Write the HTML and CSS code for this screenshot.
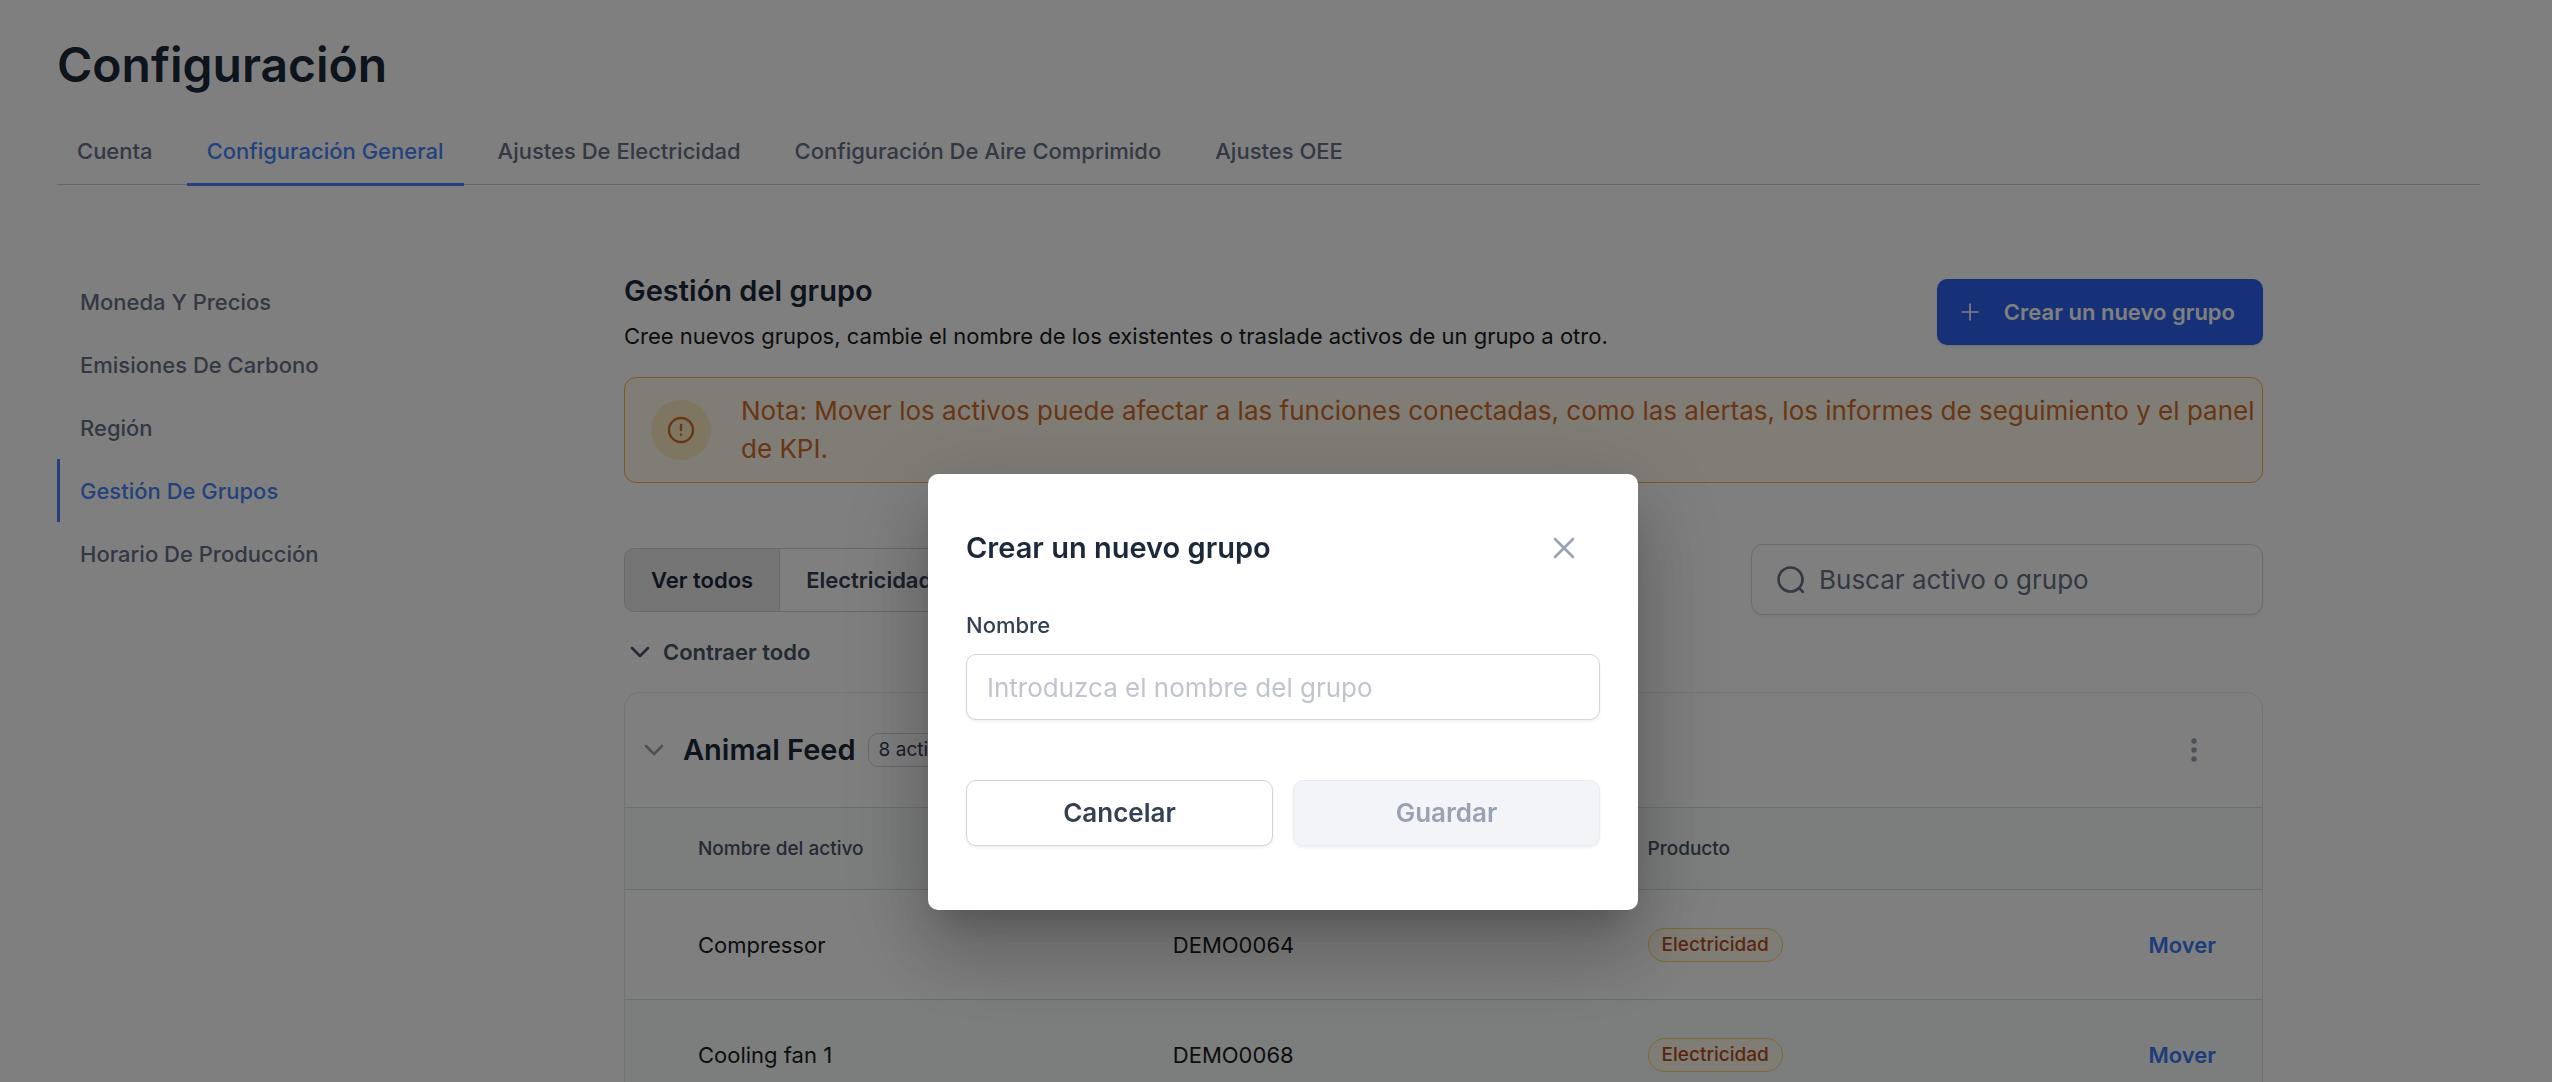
FILE: index.html
```html
<!DOCTYPE html>
<html lang="es">
<head>
    <meta charset="UTF-8">
    <meta name="viewport" content="width=device-width, initial-scale=1.0">
    <title>Configuración</title>
    <link rel="stylesheet" href="styles.css">
</head>
<body>
    <div class="page">
        <h1>Configuración</h1>

        <nav class="tabs">
            <a href="#" class="tab">Cuenta</a>
            <a href="#" class="tab active">Configuración General</a>
            <a href="#" class="tab">Ajustes De Electricidad</a>
            <a href="#" class="tab">Configuración De Aire Comprimido</a>
            <a href="#" class="tab">Ajustes OEE</a>
        </nav>

        <div class="layout">
            <nav class="side-menu">
                <a href="#">Moneda Y Precios</a>
                <a href="#">Emisiones De Carbono</a>
                <a href="#">Región</a>
                <a href="#" class="active">Gestión De Grupos</a>
                <a href="#">Horario De Producción</a>
            </nav>

            <main>
                <div class="section-header">
                    <div>
                        <h2>Gestión del grupo</h2>
                        <p>Cree nuevos grupos, cambie el nombre de los existentes o traslade activos de un grupo a otro.</p>
                    </div>
                    <button type="button" class="btn-primary">
                        <svg width="18" height="18" viewBox="0 0 18 18" fill="none" stroke="currentColor" stroke-width="1.6" stroke-linecap="round"><path d="M9 1v16M1 9h16"/></svg>
                        Crear un nuevo grupo
                    </button>
                </div>

                <div class="alert">
                    <span class="alert-icon">
                        <svg width="28" height="28" viewBox="0 0 28 28" fill="none" stroke="currentColor" stroke-width="2.4" stroke-linecap="round"><circle cx="14" cy="14" r="12"/><path d="M14 9v5M14 18.6v.2"/></svg>
                    </span>
                    <p>Nota: Mover los activos puede afectar a las funciones conectadas, como las alertas, los informes de seguimiento y el panel de KPI.</p>
                </div>

                <div class="toolbar">
                    <div class="segmented">
                        <button type="button" class="selected">Ver todos</button>
                        <button type="button">Electricidad</button>
                        <button type="button">Aire comprimido</button>
                    </div>
                    <label class="search">
                        <svg width="30" height="30" viewBox="0 0 30 30" fill="none" stroke="currentColor" stroke-width="2.6" stroke-linecap="round"><circle cx="14.5" cy="14.5" r="12"/><path d="M23.2 23.2l3.6 3.6"/></svg>
                        <input type="search" placeholder="Buscar activo o grupo" aria-label="Buscar activo o grupo">
                    </label>
                </div>

                <button type="button" class="collapse-all">
                    <svg width="20" height="12" viewBox="0 0 20 12" fill="none" stroke="currentColor" stroke-width="2.6" stroke-linecap="round" stroke-linejoin="round"><path d="M2 2l8 8 8-8"/></svg>
                    Contraer todo
                </button>

                <section class="group">
                    <div class="group-header">
                        <button type="button" class="icon-btn" aria-label="Contraer grupo">
                            <svg width="20" height="12" viewBox="0 0 20 12" fill="none" stroke="currentColor" stroke-width="2.6" stroke-linecap="round" stroke-linejoin="round"><path d="M2 2l8 8 8-8"/></svg>
                        </button>
                        <h3>Animal Feed</h3>
                        <span class="count">8 activos</span>
                        <button type="button" class="icon-btn more" aria-label="Más opciones">
                            <svg width="6" height="24" viewBox="0 0 6 24" fill="currentColor"><circle cx="3" cy="3" r="2.7"/><circle cx="3" cy="12" r="2.7"/><circle cx="3" cy="21" r="2.7"/></svg>
                        </button>
                    </div>
                    <table>
                        <thead>
                            <tr>
                                <th class="col-name">Nombre del activo</th>
                                <th class="col-data">ID del activo</th>
                                <th class="col-data">Producto</th>
                                <th class="col-action"></th>
                            </tr>
                        </thead>
                        <tbody>
                            <tr>
                                <td class="col-name">Compressor</td>
                                <td>DEMO0064</td>
                                <td><span class="badge">Electricidad</span></td>
                                <td class="col-action"><a href="#">Mover</a></td>
                            </tr>
                            <tr>
                                <td class="col-name">Cooling fan 1</td>
                                <td>DEMO0068</td>
                                <td><span class="badge">Electricidad</span></td>
                                <td class="col-action"><a href="#">Mover</a></td>
                            </tr>
                        </tbody>
                    </table>
                </section>
            </main>
        </div>
    </div>

    <div class="overlay">
        <form class="modal" role="dialog" aria-labelledby="modalTitle">
            <div class="modal-header">
                <h2 id="modalTitle">Crear un nuevo grupo</h2>
                <button type="button" class="icon-btn" aria-label="Cerrar">
                    <svg width="22" height="22" viewBox="0 0 22 22" fill="none" stroke="currentColor" stroke-width="2.6" stroke-linecap="round"><path d="M2 2l18 18M20 2L2 20"/></svg>
                </button>
            </div>
            <label for="groupName">Nombre</label>
            <input type="text" id="groupName" placeholder="Introduzca el nombre del grupo">
            <div class="modal-actions">
                <button type="button" class="cancel">Cancelar</button>
                <button type="submit" class="save" disabled>Guardar</button>
            </div>
        </form>
    </div>
</body>
</html>
```
FILE: styles.css
```css
* {
    box-sizing: border-box;
}
body {
    margin: 0;
    height: 100vh;
    overflow: hidden;
    background-color: white;
    color: #1a1a1a;
    font-family: Inter, "Liberation Sans", sans-serif;
    font-size: 22px;
    line-height: 32px;
}
h1, h2, h3, p {
    margin: 0;
}
h1, h2, h3 {
    color: #1d2939;
    font-weight: 600;
}
a {
    text-decoration: none;
}
button, input {
    font-family: inherit;
    font-size: inherit;
    line-height: inherit;
}
button {
    cursor: pointer;
}
svg {
    display: block;
    flex: none;
}

.page {
    padding: 36px 72px 0 57px;
}
h1 {
    font-size: 48px;
    line-height: 58px;
}

/* Tabs */
.tabs {
    display: flex;
    gap: 14px;
    margin-top: 32px;
    border-bottom: 1px solid #d0d0d8;
}
.tab {
    height: 60px;
    margin-bottom: -2px;
    padding: 9px 20px;
    color: #667085;
    font-weight: 500;
    border-bottom: 3px solid transparent;
}
.tab.active {
    color: #4685fa;
    border-bottom-color: #4685fa;
}

/* Side menu and content */
.layout {
    display: grid;
    grid-template-columns: 567px minmax(0, 1639px);
    padding-top: 84px;
}
.side-menu {
    padding-top: 1px;
}
.side-menu a {
    display: block;
    width: 400px;
    padding: 16px 20px 15px;
    color: #667085;
    font-weight: 500;
    border-left: 3px solid transparent;
}
.side-menu a.active {
    color: #4685fa;
    border-left-color: #4685fa;
}

.section-header {
    display: flex;
    justify-content: space-between;
    align-items: center;
    padding-top: 2px;
}
h2 {
    font-size: 29px;
    line-height: 40px;
}
.section-header p {
    margin-top: 9px;
}
.btn-primary {
    display: flex;
    align-items: center;
    gap: 25px;
    height: 66px;
    padding: 0 28px 0 24px;
    color: white;
    background-color: #2e63f2;
    border: none;
    border-radius: 10px;
    font-weight: 600;
    box-shadow: 0 2px 3px rgba(16,24,40,0.1);
}

.alert {
    display: flex;
    align-items: center;
    gap: 30px;
    margin-top: 25px;
    padding: 14px 0 14px 26px;
    color: #d26c2a;
    background-color: #fffaeb;
    border: 1px solid #f5b53d;
    border-radius: 12px;
    font-size: 26px;
    line-height: 38px;
}
.alert-icon {
    display: flex;
    flex: none;
    align-items: center;
    justify-content: center;
    width: 60px;
    height: 60px;
    background-color: #fcedc2;
    border-radius: 50%;
}

.toolbar {
    display: flex;
    justify-content: space-between;
    align-items: center;
    margin-top: 61px;
}
.segmented {
    display: flex;
    border: 1px solid #d0d0d8;
    border-radius: 10px;
    overflow: hidden;
}
.segmented button {
    height: 62px;
    padding: 0 26px;
    color: #344054;
    background-color: white;
    border: none;
    border-left: 1px solid #d0d0d8;
    font-weight: 600;
}
.segmented button:first-child {
    border-left: none;
}
.segmented .selected {
    color: #1d2939;
    background-color: #eaeaea;
}
.search {
    display: flex;
    align-items: center;
    gap: 13px;
    width: 512px;
    height: 71px;
    padding: 0 24px;
    color: #667085;
    border: 1px solid #d5d7db;
    border-radius: 12px;
    font-size: 26px;
    box-shadow: 0 2px 3px rgba(16,24,40,0.06);
}
.search input {
    flex: 1;
    min-width: 0;
    padding: 0;
    border: none;
    outline: none;
    background: none;
}
.search input::placeholder {
    color: #667085;
}

.collapse-all {
    display: flex;
    align-items: center;
    gap: 13px;
    margin-top: 21px;
    padding: 0 6px;
    color: #475467;
    background: none;
    border: none;
    font-weight: 600;
}

/* Group card */
.group {
    margin-top: 24px;
    border: 1px solid #e4e6ea;
    border-radius: 16px;
    overflow: hidden;
}
.group-header {
    display: flex;
    align-items: center;
    height: 114px;
    padding: 0 65px 0 19px;
}
.icon-btn {
    padding: 0;
    color: #98a2b3;
    background: none;
    border: none;
}
h3 {
    margin: 0 12px 0 19px;
    font-size: 29px;
    line-height: 40px;
}
.count {
    padding: 0 10px;
    color: #344054;
    border: 1px solid #d0d5dd;
    border-radius: 10px;
    font-size: 19px;
}
.more {
    margin-left: auto;
}
table {
    width: 100%;
    table-layout: fixed;
    border-collapse: collapse;
}
th, td {
    padding: 0 24px;
    text-align: left;
    border-top: 1px solid #dcdfe3;
}
th {
    height: 82px;
    color: #475467;
    font-size: 19px;
    font-weight: 500;
}
td {
    height: 110px;
}
thead tr, tbody tr:nth-child(even) {
    background-color: #f9fbfa;
}
.col-name {
    width: 32%;
    padding-left: 73px;
}
.col-data {
    width: 29%;
}
.col-action {
    width: 10%;
    padding: 0 46px 0 0;
    text-align: right;
}
.col-action a {
    color: #3b78f5;
    font-weight: 600;
}
.badge {
    display: inline-block;
    padding: 0 13px;
    color: #b54d20;
    background-color: #fffaeb;
    border: 1px solid #f5d272;
    border-radius: 18px;
    font-size: 19px;
    font-weight: 500;
}

/* Modal */
.overlay {
    position: fixed;
    inset: 0;
    display: flex;
    justify-content: center;
    align-items: flex-start;
    padding: 474px 0 0 14px;
    background-color: rgba(0,0,0,0.5);
}
.modal {
    width: 710px;
    padding: 54px 38px 64px;
    background-color: white;
    border-radius: 10px;
    box-shadow: 0 22px 30px -14px rgba(0,0,0,0.2),
                0 48px 76px 6px rgba(0,0,0,0.14),
                0 18px 92px 16px rgba(0,0,0,0.12);
}
.modal-header {
    display: flex;
    justify-content: space-between;
    align-items: center;
    padding-right: 25px;
}
.modal label {
    display: block;
    margin: 41px 0 13px;
    color: #344054;
    font-weight: 500;
}
.modal input {
    display: block;
    width: 100%;
    height: 66px;
    padding: 0 20px;
    border: 1px solid #d0d5dd;
    border-radius: 10px;
    font-size: 26px;
    box-shadow: 0 2px 3px rgba(16,24,40,0.06);
}
.modal input::placeholder {
    color: #c0c4cf;
}
.modal-actions {
    display: flex;
    gap: 20px;
    margin-top: 60px;
}
.modal-actions button {
    flex: 1;
    height: 66px;
    color: #344054;
    background-color: white;
    border: 1px solid #d0d5dd;
    border-radius: 10px;
    font-size: 26px;
    font-weight: 600;
    box-shadow: 0 2px 3px rgba(16,24,40,0.06);
}
.modal-actions .save {
    color: #98a2b3;
    background-color: #f2f4f7;
    border-color: #eaecf0;
}
```
